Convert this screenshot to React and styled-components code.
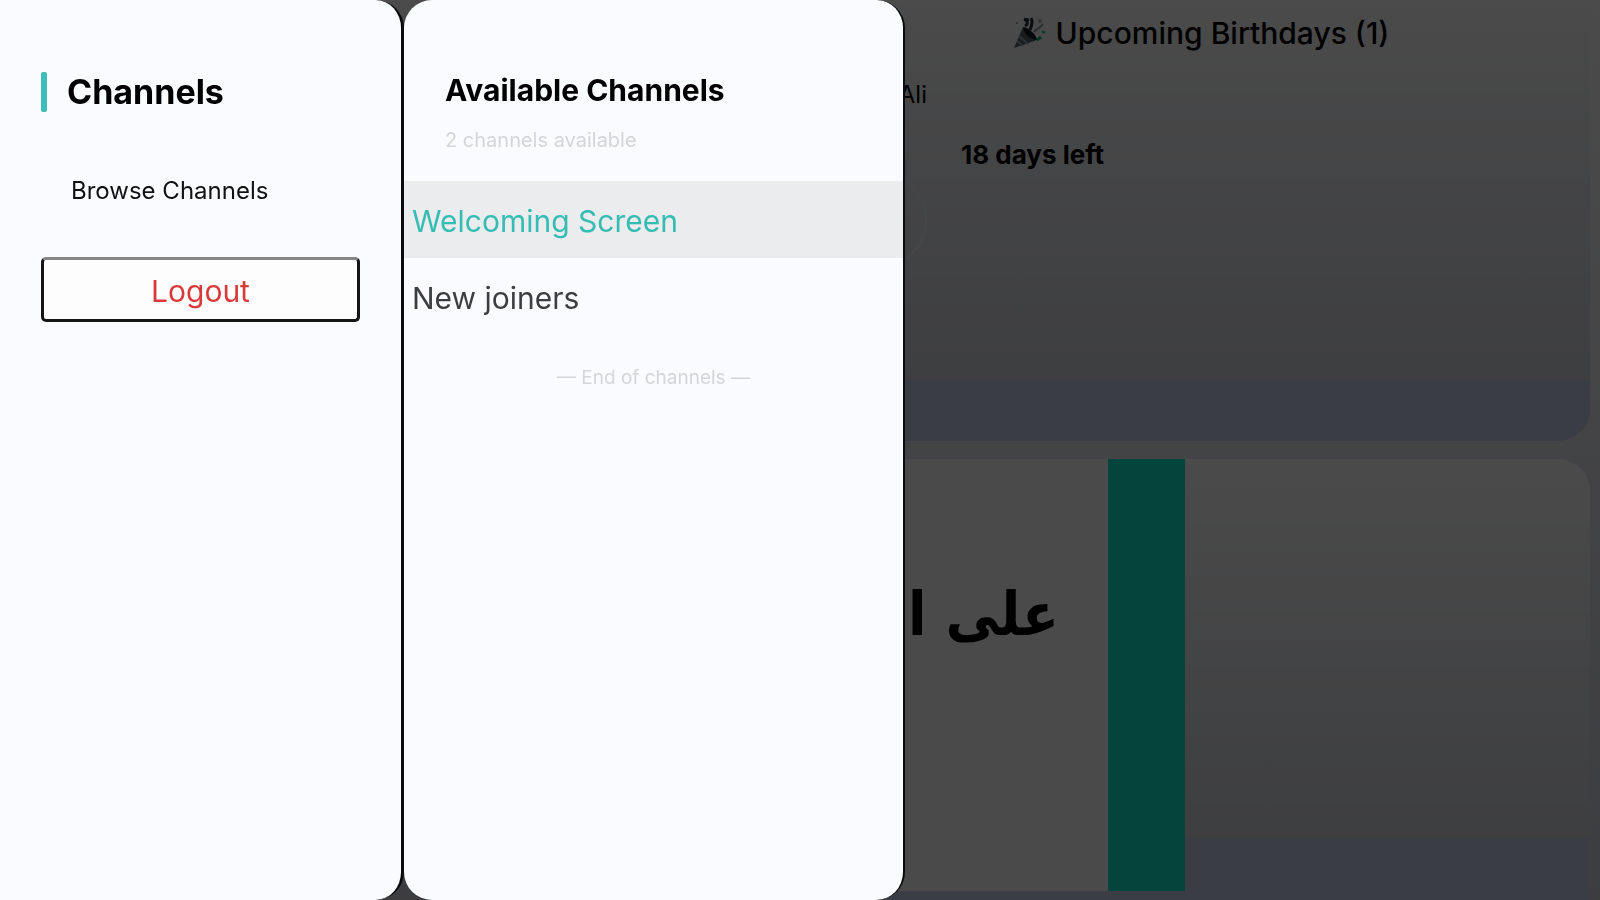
import React, { useState } from 'react';
import styled, { createGlobalStyle } from 'styled-components';

const GlobalStyle = createGlobalStyle`
  * {
    box-sizing: border-box;
  }

  body {
    margin: 0;
    font-family: Inter, 'Liberation Sans', sans-serif;
    color: #000;
    background: #dddfe6;
  }

  button {
    font-family: inherit;
    cursor: pointer;
  }
`;

const Dashboard = styled.main`
  display: grid;
  grid-template-columns: 1fr 1fr;
  grid-template-rows: 1fr 1fr;
  gap: 18px 22px;
  height: 100vh;
  padding: 0 10px;
  overflow: hidden;
  background: linear-gradient(#fafafa, #e2e3e8 50%, #cbced8);
`;

const Card = styled.section`
  grid-column: 2;
  display: flex;
  min-width: 0;
  overflow: hidden;
  border-radius: ${({ $top }) => ($top ? '0 0 32px 32px' : '32px 32px 0 0')};
  background: linear-gradient(#fafafa, #e4e6ea 40%, #cfd1d6 86%, #c3cbe0 86%);
`;

const Birthdays = styled.div`
  flex: 1;
  display: flex;
  flex-direction: column;
  gap: 24px;
  padding-top: 14px;
`;

const BirthdayTitle = styled.h2`
  display: flex;
  align-items: center;
  justify-content: center;
  gap: 10px;
  margin: 0;
  font-size: 30px;
  font-weight: 500;
  line-height: 38px;
`;

const BirthdayRow = styled.div`
  display: flex;
  gap: 34px;
  padding-left: 20px;
`;

const Person = styled.div`
  display: flex;
  flex-direction: column;
  align-items: flex-end;
  width: 96px;
  gap: 58px;
  font-size: 24px;
  line-height: 38px;
`;

const Avatar = styled.div`
  width: 96px;
  height: 96px;
  border: 2px solid #e8e9ec;
  border-radius: 50%;
`;

const DaysLeft = styled.p`
  margin: 60px 0 0;
  font-size: 26px;
  font-weight: 700;
  line-height: 38px;
`;

const Slide = styled.div`
  display: flex;
  flex: 0 0 48%;
  margin-bottom: 9px;
  background: #f8f8f8;
`;

const SlideText = styled.p`
  flex: 1;
  margin: 115px 0 0;
  padding-right: 49px;
  font-family: 'DejaVu Sans Condensed', 'DejaVu Sans', sans-serif;
  font-size: 60px;
  font-weight: 700;
  line-height: 80px;
  white-space: nowrap;
`;

const SlideStripe = styled.div`
  flex: 0 0 77px;
  background: #0de3c8;
`;

const Backdrop = styled.div`
  position: fixed;
  inset: 0;
  display: grid;
  grid-template-columns: 404fr 501fr 695fr;
  background: rgba(0, 0, 0, 0.7);
`;

const Drawer = styled.aside`
  min-width: 0;
  background: #fafbfe;
  border-right: 2px solid #0a0b0c;
  border-radius: ${({ $first }) => ($first ? '0 28px 28px 0' : '28px')};
`;

const Menu = styled(Drawer)`
  display: flex;
  flex-direction: column;
  padding: 72px 41px;
  border-right-width: 3px;
`;

const MenuTitle = styled.h1`
  display: flex;
  align-items: center;
  gap: 20px;
  margin: 0 0 60px;
  font-size: 34px;
  font-weight: 700;
  line-height: 40px;

  &::before {
    content: '';
    width: 6px;
    height: 40px;
    border-radius: 2px;
    background: #3dbdb5;
  }
`;

const BrowseButton = styled.button`
  padding: 0 30px;
  border: 0;
  background: none;
  color: #111;
  font-size: 24px;
  line-height: 38px;
  text-align: left;
`;

const LogoutButton = styled.button`
  height: 65px;
  margin-top: 47px;
  padding: 3px 0 0;
  border: 3px solid #151515;
  border-top-color: #858585;
  border-radius: 5px;
  background: #fdfdfe;
  color: #d83a3a;
  font-size: 30px;
  line-height: 38px;
`;

const ListHeader = styled.header`
  padding: 71px 41px 25px;
`;

const ListTitle = styled.h2`
  margin: 0 0 15px;
  font-size: 30px;
  font-weight: 700;
  line-height: 38px;
`;

const Muted = styled.p`
  margin: 0;
  color: #d4d5d8;
  font-size: ${({ $center }) => ($center ? '19px' : '20px')};
  line-height: 32px;
  text-align: ${({ $center }) => ($center ? 'center' : 'left')};
`;

const ChannelList = styled.ul`
  margin: 0 0 27px;
  padding: 0;
  list-style: none;
`;

const ChannelButton = styled.button`
  display: block;
  width: 100%;
  height: 77px;
  padding: 3px 8px 0;
  border: 0;
  background: ${({ $active }) => ($active ? '#eaecee' : 'transparent')};
  color: ${({ $active }) => ($active ? '#35bcb3' : '#3c3f42')};
  font-size: 30px;
  text-align: left;
`;

const PartyPopper = () => (
  <svg width="34" height="34" viewBox="0 0 34 34" fill="none" aria-hidden="true">
    <path d="M2 32 L11 11 C14 18 18 22 25 24 Z" fill="#5b6067" />
    <path d="M11 11 C17 12 24 18 25 24 C18 24 11 17 11 11 Z" fill="#15181c" />
    <path d="M7 20 L16 28 M5 25 L11 30" stroke="#9da1a8" strokeWidth="2" />
    <path d="M13 10 C17 8 15 4 12 3 M18 14 C20 9 21 5 19 2" stroke="#2c3036" strokeWidth="3" />
    <path d="M22 16 C25 12 28 13 31 8" stroke="#8f959d" strokeWidth="2" />
    <path d="M25 24 L29 21 M31 17 L32 15" stroke="#07b57d" strokeWidth="3" />
    <circle cx="15" cy="4" r="2" fill="#20242a" />
    <circle cx="5" cy="7" r="1" fill="#8f959d" />
    <circle cx="28" cy="5" r="2" fill="#a8adb4" />
  </svg>
);

const channels = ['Welcoming Screen', 'New joiners'];

const App = () => {
  const [active, setActive] = useState(channels[0]);

  return (
    <>
      <GlobalStyle />
      <Dashboard>
        <Card $top>
          <Birthdays>
            <BirthdayTitle>
              <PartyPopper />
              Upcoming Birthdays (1)
            </BirthdayTitle>
            <BirthdayRow>
              <Person>
                Ali
                <Avatar />
              </Person>
              <DaysLeft>18 days left</DaysLeft>
            </BirthdayRow>
          </Birthdays>
        </Card>
        <Card>
          <Slide>
            <SlideText dir="rtl" lang="ar">على ام</SlideText>
            <SlideStripe />
          </Slide>
        </Card>
      </Dashboard>

      <Backdrop>
        <Menu $first>
          <MenuTitle>Channels</MenuTitle>
          <BrowseButton type="button">Browse Channels</BrowseButton>
          <LogoutButton type="button">Logout</LogoutButton>
        </Menu>
        <Drawer>
          <ListHeader>
            <ListTitle>Available Channels</ListTitle>
            <Muted>{channels.length} channels available</Muted>
          </ListHeader>
          <ChannelList>
            {channels.map((name) => (
              <li key={name}>
                <ChannelButton
                  type="button"
                  $active={name === active}
                  onClick={() => setActive(name)}
                >
                  {name}
                </ChannelButton>
              </li>
            ))}
          </ChannelList>
          <Muted $center>— End of channels —</Muted>
        </Drawer>
      </Backdrop>
    </>
  );
};

export default App;
